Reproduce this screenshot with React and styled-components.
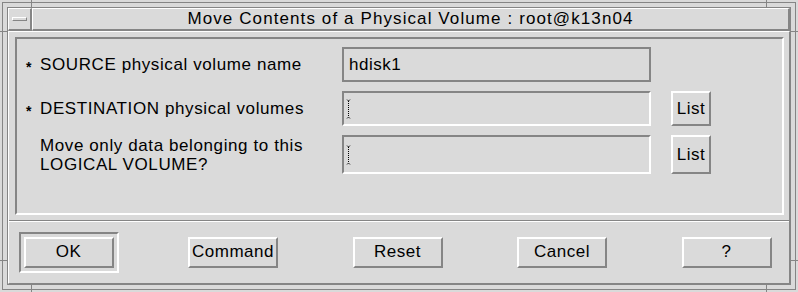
import React from "react";
import styled, { createGlobalStyle } from "styled-components";

const bg = "#dadada";
const dark = "#858585";
const light = "#ffffff";

const GlobalStyle = createGlobalStyle`
  html, body {
    margin: 0;
    padding: 0;
    background: ${bg};
  }
  * {
    box-sizing: border-box;
  }
`;

const Window = styled.div`
  position: relative;
  width: 798px;
  height: 292px;
  padding: 2px;
  background: ${bg};
  font-family: "Liberation Sans", Arial, sans-serif;
  font-size: 17px;
  color: #000;
`;

const OuterFrame = styled.div`
  height: 100%;
  border: 1px solid ${dark};
  padding: 4px;
`;

const InnerFrame = styled.div`
  height: 100%;
  border: 1px solid ${dark};
  display: flex;
  flex-direction: column;
`;

const Tick = styled.span`
  position: absolute;
  background: ${dark};
  ${(p) => (p.vertical ? "width: 1px; height: 8px;" : "width: 8px; height: 1px;")}
`;

const TitleRow = styled.div`
  display: flex;
  height: 23px;
`;

const Raised = styled.div`
  border-top: 1px solid ${light};
  border-left: 1px solid ${light};
  border-bottom: 2px solid ${dark};
  border-right: 2px solid ${dark};
`;

const MenuButton = styled(Raised)`
  width: 24px;
  display: flex;
  align-items: center;
  justify-content: center;
`;

const MenuBar = styled.span`
  width: 15px;
  height: 4px;
  border-top: 1px solid ${light};
  border-left: 1px solid ${light};
  border-bottom: 1px solid ${dark};
  border-right: 1px solid ${dark};
`;

const TitleBar = styled(Raised)`
  flex: 1;
  display: flex;
  align-items: center;
  justify-content: center;
  letter-spacing: 1.1px;
`;

const Content = styled.div`
  flex: 1;
  display: flex;
  flex-direction: column;
  border-top: 1px solid ${light};
  border-left: 1px solid ${light};
  border-bottom: 1px solid ${dark};
  border-right: 1px solid ${dark};
`;

const FormArea = styled.div`
  padding: 5px 5px 5px 6px;
  border-bottom: 1px solid ${dark};
  box-shadow: 0 1px 0 ${light};
`;

const Panel = styled.div`
  height: 178px;
  border-top: 2px solid ${dark};
  border-left: 2px solid ${dark};
  border-bottom: 2px solid ${light};
  border-right: 2px solid ${light};
  padding: 8px 8px;
  display: grid;
  grid-template-columns: 15px 302px 309px 60px;
  grid-template-rows: 35px 35px 39px;
  row-gap: 9px;
  align-items: center;
  align-content: start;
`;

const Star = styled.span`
  font-size: 14px;
  font-weight: bold;
  line-height: 1;
  padding-top: 5px;
  padding-left: 1px;
`;

const Label = styled.div`
  letter-spacing: 0.6px;
  line-height: 19px;
`;

const Field = styled.div`
  height: 100%;
  display: flex;
  align-items: center;
  padding-left: 5px;
  letter-spacing: 0.5px;
  ${(p) =>
    p.readOnly
      ? `border: 2px solid ${dark};`
      : `border-top: 2px solid ${dark};
         border-left: 2px solid ${dark};
         border-bottom: 2px solid ${light};
         border-right: 2px solid ${light};
         padding-left: 2px;`}
`;

const Button = styled.button`
  font: inherit;
  color: #000;
  letter-spacing: 0.5px;
  background: ${bg};
  padding: 0;
  border-top: 2px solid ${light};
  border-left: 2px solid ${light};
  border-bottom: 2px solid ${dark};
  border-right: 2px solid ${dark};
  border-radius: 0;
  width: 90px;
  height: 31px;
`;

const ListButton = styled(Button)`
  justify-self: end;
  width: 40px;
  height: 100%;
`;

const ButtonRow = styled.div`
  flex: 1;
  display: grid;
  grid-template-columns: repeat(5, 99px);
  justify-content: space-between;
  align-items: center;
  justify-items: center;
  padding: 0 13px 0 10px;
`;

const DefaultRing = styled.div`
  padding: 3px;
  border-top: 2px solid ${dark};
  border-left: 2px solid ${dark};
  border-bottom: 2px solid ${light};
  border-right: 2px solid ${light};
`;

function Cursor() {
  return (
    <svg width="5" height="20" viewBox="0 0 5 20">
      <path d="M1 0.5 L2.5 2 L4 0.5 M1 19.5 L2.5 18 L4 19.5" stroke="#000" strokeWidth="0.8" fill="none" />
      <line x1="2.5" y1="2" x2="2.5" y2="18" stroke="#000" strokeWidth="1" strokeDasharray="1 1" />
    </svg>
  );
}

export default function App() {
  return (
    <>
      <GlobalStyle />
      <Window>
        <Tick vertical style={{ left: 31, top: 0 }} />
        <Tick vertical style={{ left: 766, top: 0 }} />
        <Tick vertical style={{ left: 31, bottom: 0 }} />
        <Tick vertical style={{ left: 766, bottom: 0 }} />
        <Tick style={{ left: 0, top: 31 }} />
        <Tick style={{ right: 0, top: 31 }} />
        <Tick style={{ left: 0, top: 260 }} />
        <Tick style={{ right: 0, top: 260 }} />
        <OuterFrame>
          <InnerFrame>
            <TitleRow>
              <MenuButton>
                <MenuBar />
              </MenuButton>
              <TitleBar>Move Contents of a Physical Volume : root@k13n04</TitleBar>
            </TitleRow>
            <Content>
              <FormArea>
                <Panel>
                  <Star>*</Star>
                  <Label>SOURCE physical volume name</Label>
                  <Field readOnly>hdisk1</Field>
                  <span />

                  <Star>*</Star>
                  <Label>DESTINATION physical volumes</Label>
                  <Field>
                    <Cursor />
                  </Field>
                  <ListButton>List</ListButton>

                  <span />
                  <Label>
                    Move only data belonging to this
                    <br />
                    LOGICAL VOLUME?
                  </Label>
                  <Field>
                    <Cursor />
                  </Field>
                  <ListButton>List</ListButton>
                </Panel>
              </FormArea>
              <ButtonRow>
                <DefaultRing>
                  <Button>OK</Button>
                </DefaultRing>
                <Button>Command</Button>
                <Button>Reset</Button>
                <Button>Cancel</Button>
                <Button>?</Button>
              </ButtonRow>
            </Content>
          </InnerFrame>
        </OuterFrame>
      </Window>
    </>
  );
}
